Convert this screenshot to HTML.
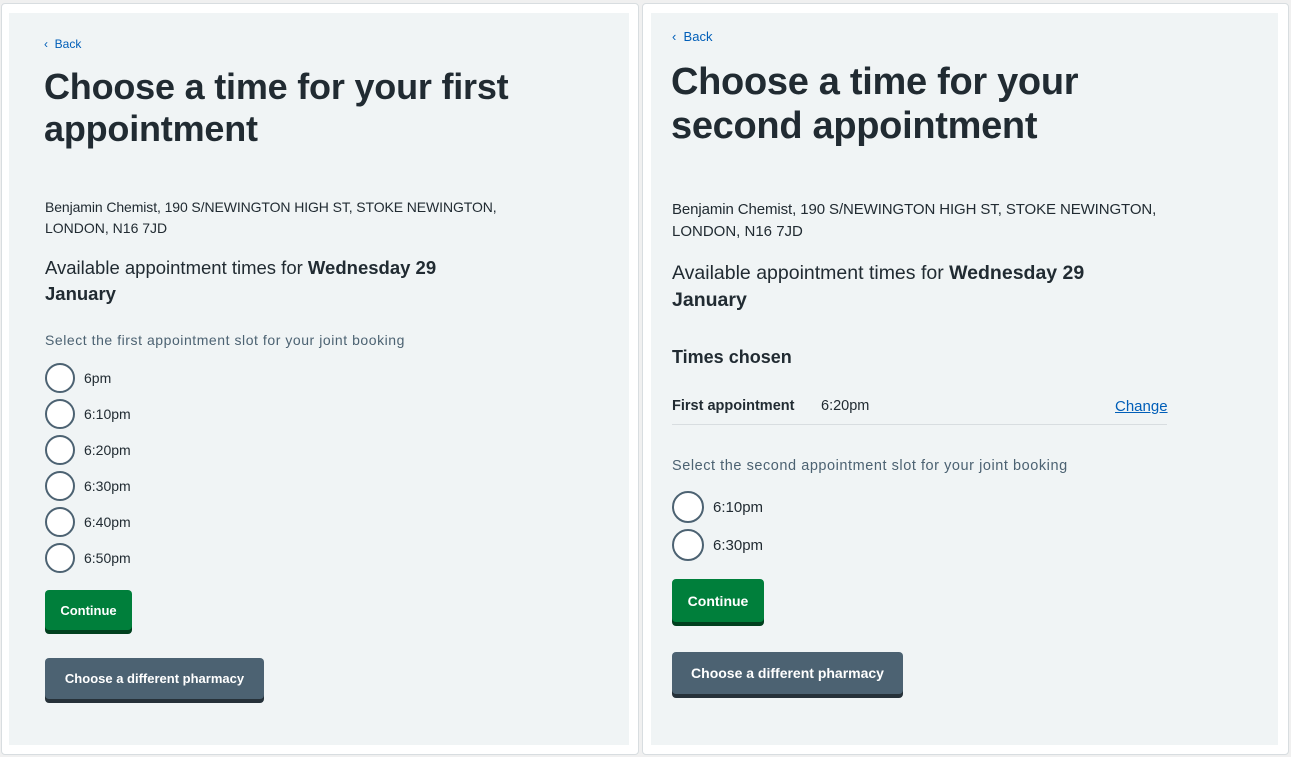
<!DOCTYPE html><html><head><style>
body{margin:0;width:1291px;height:757px;background:#f0f0f0;position:relative;overflow:hidden;font-family:"Liberation Sans",sans-serif;color:#212b32}
.card{position:absolute;background:#fff;border:1px solid #d8dde0;border-radius:4px}
.in{position:absolute;background:#f0f4f5}
.t{position:absolute;white-space:nowrap;line-height:1}
.r{position:absolute;border:2px solid #4c6272;border-radius:50%;background:#fff;box-sizing:border-box}
.btn{position:absolute;color:#fff;font-weight:bold;border-radius:4px;display:flex;align-items:center;justify-content:center;box-sizing:border-box}
a{color:#005eb8}
</style></head><body>
<div class="card" style="left:1px;top:3px;width:636px;height:750px"></div>
<div class="in" style="left:9px;top:13px;width:620px;height:732px"></div>
<div class="card" style="left:642px;top:3px;width:645px;height:750px"></div>
<div class="in" style="left:651px;top:13px;width:627px;height:732px"></div>

<!-- LEFT -->
<div class="t" style="left:44px;top:38px;font-size:12px;color:#005eb8">&#8249;&nbsp; Back</div>
<div class="t" style="left:44px;top:69px;font-size:36px;font-weight:bold;letter-spacing:-0.2px">Choose a time for your first</div>
<div class="t" style="left:44px;top:111px;font-size:36px;font-weight:bold;letter-spacing:-0.2px">appointment</div>
<div class="t" style="left:45px;top:200px;font-size:14px;letter-spacing:-0.1px">Benjamin Chemist, 190 S/NEWINGTON HIGH ST, STOKE NEWINGTON,</div>
<div class="t" style="left:45px;top:221px;font-size:14px">LONDON, N16 7JD</div>
<div class="t" style="left:45px;top:259px;font-size:18.5px">Available appointment times for <b>Wednesday 29</b></div>
<div class="t" style="left:45px;top:285px;font-size:18.5px;font-weight:bold">January</div>
<div class="t" style="left:45px;top:333px;font-size:14px;color:#4c6272;letter-spacing:0.55px">Select the first appointment slot for your joint booking</div>
<div class="r" style="left:45px;top:363px;width:30px;height:30px"></div><div class="t" style="left:84px;top:371px;font-size:14px">6pm</div>
<div class="r" style="left:45px;top:399px;width:30px;height:30px"></div><div class="t" style="left:84px;top:407px;font-size:14px">6:10pm</div>
<div class="r" style="left:45px;top:435px;width:30px;height:30px"></div><div class="t" style="left:84px;top:443px;font-size:14px">6:20pm</div>
<div class="r" style="left:45px;top:471px;width:30px;height:30px"></div><div class="t" style="left:84px;top:479px;font-size:14px">6:30pm</div>
<div class="r" style="left:45px;top:507px;width:30px;height:30px"></div><div class="t" style="left:84px;top:515px;font-size:14px">6:40pm</div>
<div class="r" style="left:45px;top:543px;width:30px;height:30px"></div><div class="t" style="left:84px;top:551px;font-size:14px">6:50pm</div>
<div class="btn" style="left:45px;top:590px;width:87px;height:40px;background:#007f3b;box-shadow:0 4px 0 #00401e;font-size:13px">Continue</div>
<div class="btn" style="left:45px;top:658px;width:219px;height:41px;background:#4c6272;box-shadow:0 4px 0 #263139;font-size:13px">Choose a different pharmacy</div>

<!-- RIGHT -->
<div class="t" style="left:672px;top:30px;font-size:13px;color:#005eb8">&#8249;&nbsp; Back</div>
<div class="t" style="left:671px;top:63px;font-size:38px;font-weight:bold;letter-spacing:-0.3px">Choose a time for your</div>
<div class="t" style="left:671px;top:107px;font-size:38px;font-weight:bold;letter-spacing:-0.3px">second appointment</div>
<div class="t" style="left:672px;top:202px;font-size:15px;letter-spacing:-0.1px">Benjamin Chemist, 190 S/NEWINGTON HIGH ST, STOKE NEWINGTON,</div>
<div class="t" style="left:672px;top:224px;font-size:15px">LONDON, N16 7JD</div>
<div class="t" style="left:672px;top:264px;font-size:19.5px">Available appointment times for <b>Wednesday 29</b></div>
<div class="t" style="left:672px;top:291px;font-size:19.5px;font-weight:bold">January</div>
<div class="t" style="left:672px;top:348px;font-size:18px;font-weight:bold">Times chosen</div>
<div class="t" style="left:672px;top:399px;font-size:14.5px;font-weight:bold">First appointment</div>
<div class="t" style="left:821px;top:399px;font-size:14.5px">6:20pm</div>
<div class="t" style="left:1115px;top:399px;font-size:15px"><a style="text-decoration:underline">Change</a></div>
<div style="position:absolute;left:672px;top:424px;width:495px;height:1px;background:#d8dde0"></div>
<div class="t" style="left:672px;top:459px;font-size:14.5px;color:#4c6272;letter-spacing:0.55px">Select the second appointment slot for your joint booking</div>
<div class="r" style="left:672px;top:491px;width:32px;height:32px"></div><div class="t" style="left:713px;top:500px;font-size:15px">6:10pm</div>
<div class="r" style="left:672px;top:529px;width:32px;height:32px"></div><div class="t" style="left:713px;top:538px;font-size:15px">6:30pm</div>
<div class="btn" style="left:672px;top:579px;width:92px;height:43px;background:#007f3b;box-shadow:0 4px 0 #00401e;font-size:14px">Continue</div>
<div class="btn" style="left:672px;top:652px;width:231px;height:42px;background:#4c6272;box-shadow:0 4px 0 #263139;font-size:14px">Choose a different pharmacy</div>
</body></html>
